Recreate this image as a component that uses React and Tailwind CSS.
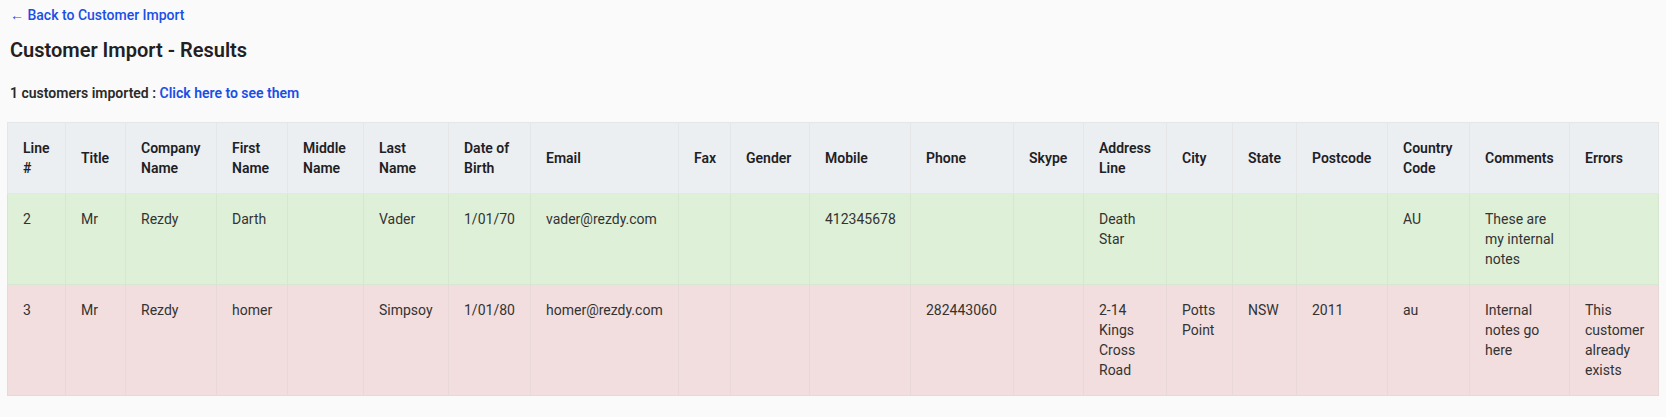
const COLUMNS = [
  { label: "Line #", w: "w-[58px]" },
  { label: "Title", w: "w-[60px]" },
  { label: "Company Name", w: "w-[91px]" },
  { label: "First Name", w: "w-[71px]" },
  { label: "Middle Name", w: "w-[76px]" },
  { label: "Last Name", w: "w-[85px]" },
  { label: "Date of Birth", w: "w-[82px]" },
  { label: "Email", w: "w-[148px]" },
  { label: "Fax", w: "w-[52px]" },
  { label: "Gender", w: "w-[79px]" },
  { label: "Mobile", w: "w-[101px]" },
  { label: "Phone", w: "w-[103px]" },
  { label: "Skype", w: "w-[70px]" },
  { label: "Address Line", w: "w-[83px]" },
  { label: "City", w: "w-[66px]" },
  { label: "State", w: "w-[64px]" },
  { label: "Postcode", w: "w-[91px]" },
  { label: "Country Code", w: "w-[82px]" },
  { label: "Comments", w: "w-[100px]" },
  { label: "Errors", w: "" },
];

const ROWS = [
  {
    ok: true,
    cells: ["2", "Mr", "Rezdy", "Darth", "", "Vader", "1/01/70", "vader@rezdy.com", "", "", "412345678", "", "", "Death Star", "", "", "", "AU", "These are my internal notes", ""],
  },
  {
    ok: false,
    cells: ["3", "Mr", "Rezdy", "homer", "", "Simpsoy", "1/01/80", "homer@rezdy.com", "", "", "", "282443060", "", "2-14 Kings Cross Road", "Potts Point", "NSW", "2011", "au", "Internal notes go here", "This customer already exists"],
  },
];

export default function App() {
  return (
    <div className="min-h-[417px] bg-[#fafafa] px-[7px] font-['Roboto',sans-serif] text-[14px] leading-[20px] text-[#212529]">
      <div className="px-[3px] pt-[5px]">
        <a href="#" className="font-medium text-[#1a4fe6]">
          &larr; Back to Customer Import
        </a>
        <h1 className="mt-[11px] text-[20px] font-semibold leading-[28px] text-[#1f2124]">
          Customer Import - Results
        </h1>
        <p className="mt-[19px] font-semibold text-[#2a2a2a]">
          1 customers imported :{" "}
          <a href="#" className="text-[#1a4fe6]">
            Click here to see them
          </a>
        </p>
      </div>

      <table className="mt-[19px] w-full table-fixed border-collapse border border-[#e4e6e8]">
        <thead>
          <tr className="bg-[#eceff1]">
            {COLUMNS.map((c) => (
              <th
                key={c.label}
                className={`${c.w} border border-[#e4e6e8] px-[15px] py-[15px] text-left align-middle font-semibold text-[#1e2126]`}
              >
                {c.label}
              </th>
            ))}
          </tr>
        </thead>
        <tbody>
          {ROWS.map((r) => (
            <tr key={r.cells[0]} className={r.ok ? "bg-[#dff0d8]" : "bg-[#f2dede]"}>
              {r.cells.map((v, i) => (
                <td
                  key={i}
                  className={`border ${r.ok ? "border-[#d6e6d0]" : "border-[#e8d8d8]"} px-[15px] py-[15px] align-top text-[#333]`}
                >
                  {v}
                </td>
              ))}
            </tr>
          ))}
        </tbody>
      </table>
    </div>
  );
}
